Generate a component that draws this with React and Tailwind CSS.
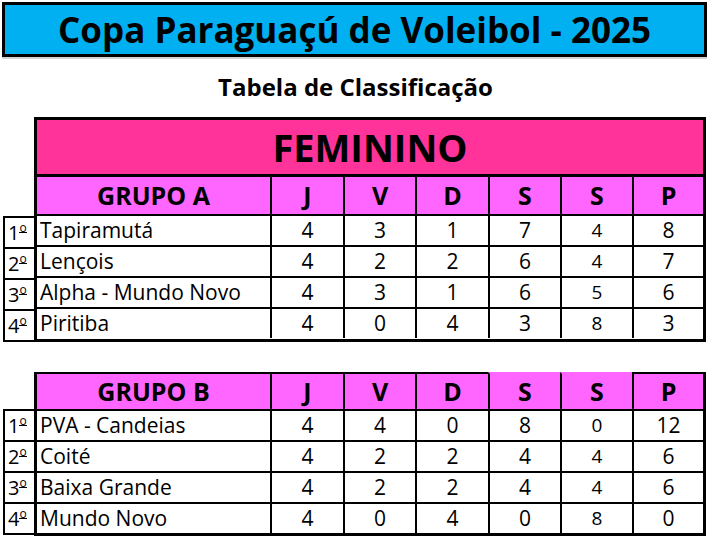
import React from "react";

const COLS = ["J", "V", "D", "S", "S", "P"];
const WIDTHS = ["w-[73px]", "w-[72px]", "w-[73px]", "w-[72px]", "w-[72px]", "flex-1"];

const groupA = [
  ["1", "Tapiramutá", 4, 3, 1, 7, 4, 8],
  ["2", "Lençois", 4, 2, 2, 6, 4, 7],
  ["3", "Alpha - Mundo Novo", 4, 3, 1, 6, 5, 6],
  ["4", "Piritiba", 4, 0, 4, 3, 8, 3],
];

const groupB = [
  ["1", "PVA - Candeias", 4, 4, 0, 8, 0, 12],
  ["2", "Coité", 4, 2, 2, 4, 4, 6],
  ["3", "Baixa Grande", 4, 2, 2, 4, 4, 6],
  ["4", "Mundo Novo", 4, 0, 4, 0, 8, 0],
];

function HeaderRow({ title, topBorders }) {
  return (
    <div className="flex h-[37px] bg-[#ff66ff] text-[25px] font-bold text-black leading-none">
      <div
        className={`w-[233px] flex items-center justify-center ${topBorders ? "border-t-2 border-black" : ""}`}
      >
        {title}
      </div>
      {COLS.map((c, i) => (
        <div
          key={i}
          className={`${WIDTHS[i]} flex items-center justify-center border-l-2 border-l-black ${
            topBorders ? (i === 3 || i === 4 ? "border-t-2 border-t-[#ff66ff]" : "border-t-2 border-t-black") : ""
          }`}
        >
          {c}
        </div>
      ))}
    </div>
  );
}

function DataRows({ rows }) {
  return rows.map((r) => (
    <div key={r[0]} className="flex h-[31px] border-t-2 border-black text-[21px] leading-none">
      <div className="w-[233px] flex items-center pl-[3px]">{r[1]}</div>
      {r.slice(2).map((v, i) => (
        <div
          key={i}
          className={`${WIDTHS[i]} flex items-center justify-center border-l-2 border-black ${i === 4 ? "text-[19px]" : ""}`}
        >
          {v}
        </div>
      ))}
    </div>
  ));
}

function RankColumn({ rows, top }) {
  return (
    <div className={`w-[34px] pl-[3px] ${top}`}>
      <div className="border-l-2 border-b-2 border-black">
        {rows.map((r) => (
          <div key={r[0]} className="h-[31px] border-t-2 border-black flex items-center pl-[3px] text-[20px] leading-none">
            {r[0]}
            <span className="text-[12px] self-start mt-[5px] border-b border-black leading-[9px]">o</span>
          </div>
        ))}
      </div>
    </div>
  );
}

export default function App() {
  return (
    <div className="w-[709px] h-[543px] bg-white overflow-hidden font-['Open_Sans',sans-serif] text-black">
      {/* Title */}
      <div className="pt-[2px] px-[2px]">
        <div className="h-[55px] w-[705px] border-[3px] border-black bg-[#00b0f0] flex items-center justify-center shadow-[0_2px_0_#d4d4d4]">
          <span className="text-[35px] font-bold leading-none">Copa Paraguaçú de Voleibol - 2025</span>
        </div>
      </div>

      <div className="h-[60px] flex items-center justify-center pl-[2px]">
        <span className="text-[24px] font-bold leading-none">Tabela de Classificação</span>
      </div>

      {/* Grupo A */}
      <div className="flex">
        <RankColumn rows={groupA} top="pt-[99px]" />
        <div className="w-[672px] border-[3px] border-black">
          <div className="h-[57px] bg-[#ff3399] border-b-[3px] border-black flex items-center justify-center">
            <span className="text-[38px] font-bold leading-none">FEMININO</span>
          </div>
          <HeaderRow title="GRUPO A" />
          <DataRows rows={groupA} />
        </div>
      </div>

      {/* Grupo B */}
      <div className="flex mt-[30px]">
        <RankColumn rows={groupB} top="pt-[37px]" />
        <div className="w-[672px] border-x-[3px] border-b-[3px] border-black">
          <HeaderRow title="GRUPO B" topBorders />
          <DataRows rows={groupB} />
        </div>
      </div>
    </div>
  );
}
